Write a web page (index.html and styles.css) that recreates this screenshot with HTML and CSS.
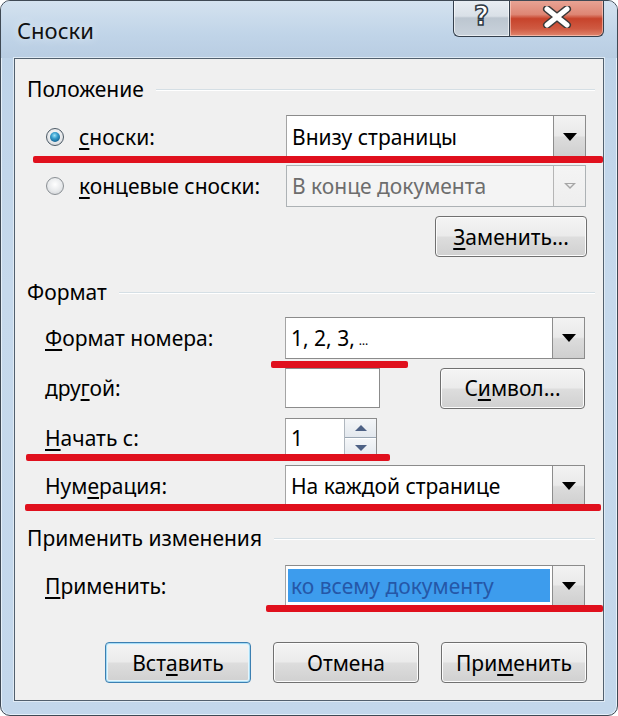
FILE: index.html
```html
<!DOCTYPE html>
<html lang="ru">
<head>
<meta charset="utf-8">
<title>Сноски</title>
<link rel="stylesheet" href="styles.css">
</head>
<body>
<div class="window">
  <div class="titlebar">
    <div class="title">Сноски</div>
    <div class="caption-buttons">
      <div class="cap-btn help"><span class="help-glyph">?</span></div>
      <div class="cap-btn close">
        <svg width="34" height="22" viewBox="0 0 34 22">
          <path d="M7 3 L27 19 M27 3 L7 19" stroke="#3a3a3a" stroke-width="8" stroke-linecap="round"/>
          <path d="M7 3 L27 19 M27 3 L7 19" stroke="#ffffff" stroke-width="5" stroke-linecap="round"/>
        </svg>
      </div>
    </div>
  </div>

  <div class="client">
    <div class="group-head"><span>Положение</span><i class="etch"></i></div>

    <div class="row r-first">
      <div class="label radio-label"><span class="radio checked"></span><span><u>с</u>носки:</span></div>
      <div class="combo"><span class="combo-text">Внизу страницы</span><span class="drop"><i class="tri"></i></span></div>
    </div>

    <div class="row r-gap7">
      <div class="label radio-label"><span class="radio"></span><span><u>к</u>онцевые сноски:</span></div>
      <div class="combo disabled"><span class="combo-text">В конце документа</span><span class="drop"><i class="tri hollow"></i></span></div>
    </div>

    <div class="row r-gap9 r-right">
      <div class="btn btn-replace"><u>З</u>аменить...</div>
    </div>

    <div class="group-head g2"><span>Формат</span><i class="etch"></i></div>

    <div class="row r-fmt">
      <div class="label"><u>Ф</u>ормат номера:</div>
      <div class="combo"><span class="combo-text">1, 2, 3, <small class="dots">…</small></span><span class="drop"><i class="tri"></i></span></div>
    </div>

    <div class="row r-other">
      <div class="label">дру<u>г</u>ой:</div>
      <div class="controls-split">
        <div class="textbox"></div>
        <div class="btn btn-symbol">С<u>и</u>мвол...</div>
      </div>
    </div>

    <div class="row r-start">
      <div class="label"><u>Н</u>ачать с:</div>
      <div class="spinner">
        <span class="spin-text">1</span>
        <span class="spin-btns">
          <span class="spin up"><i class="stri up"></i></span>
          <span class="spin down"><i class="stri down"></i></span>
        </span>
      </div>
    </div>

    <div class="row r-gap7">
      <div class="label">Нум<u>е</u>рация:</div>
      <div class="combo"><span class="combo-text">На каждой странице</span><span class="drop"><i class="tri"></i></span></div>
    </div>

    <div class="group-head g3"><span>Применить изменения</span><i class="etch"></i></div>

    <div class="row r-apply">
      <div class="label"><u>П</u>рименить:</div>
      <div class="combo"><span class="combo-text selected">ко всему документу</span><span class="drop"><i class="tri"></i></span></div>
    </div>

    <div class="buttons">
      <div class="btn btn-main focused">Вст<u>а</u>вить</div>
      <div class="btn btn-main">Отмена</div>
      <div class="btn btn-main">При<u>м</u>енить</div>
    </div>
  </div>

  <i class="redline rl1"></i>
  <i class="redline rl2"></i>
  <i class="redline rl3"></i>
  <i class="redline rl4"></i>
  <i class="redline rl5"></i>
</div>
</body>
</html>
```

FILE: styles.css
```css
html, body {
  margin: 0;
  padding: 0;
  background: #ffffff;
}

body {
  font-family: "Noto Sans", "Open Sans", sans-serif;
  font-size: 21px;
  color: #000;
}

u {
  text-decoration: underline;
  text-underline-offset: 3px;
  text-decoration-thickness: 2px;
}

.window {
  position: relative;
  width: 618px;
  height: 716px;
  box-sizing: border-box;
  border: 1px solid #3f4954;
  border-radius: 10px;
  background: linear-gradient(180deg, #c2d6ea 0%, #bed3e8 8%, #c6d9ec 40%, #c3d7eb 100%);
  box-shadow: inset 0 0 0 1px #e6f0f9;
  overflow: hidden;
  display: flex;
  flex-direction: column;
}

.titlebar {
  height: 57px;
  display: flex;
  align-items: flex-start;
  background: linear-gradient(180deg, #d4e2ef 0%, #c0d4e8 60%, #b9cde2 100%);
}

.title {
  padding-left: 16px;
  padding-top: 15px;
  font-size: 22px;
  line-height: 28px;
  color: #111;
  text-shadow: 0 0 8px #e9f1f8;
}

.caption-buttons {
  margin-left: auto;
  margin-right: 13px;
  display: flex;
  margin-top: -1px;
}

.cap-btn {
  height: 37px;
  box-sizing: border-box;
  border: 1px solid #35404d;
  border-top: none;
  display: flex;
  align-items: center;
  justify-content: center;
}

.help {
  width: 56px;
  border-right: none;
  border-radius: 0 0 0 6px;
  background: linear-gradient(180deg, #e9eef3 0%, #d9e0e7 45%, #bcc6d0 50%, #c9d2db 100%);
  box-shadow: inset 0 0 0 1px rgba(255,255,255,0.6);
}

.help-glyph {
  font-family: "DejaVu Sans", sans-serif;
  font-weight: bold;
  font-size: 26px;
  line-height: 26px;
  color: #ffffff;
  -webkit-text-stroke: 1.5px #2f3a44;
  margin-top: -4px;
}

.close {
  width: 95px;
  border-radius: 0 0 6px 0;
  background: linear-gradient(180deg, #e8a596 0%, #de8674 40%, #c7432b 52%, #cf5a42 80%, #e0866e 100%);
  box-shadow: inset 0 0 0 1px rgba(255,220,210,0.55);
}

.close svg {
  margin-top: -2px;
}

.client {
  margin: 0 13px 14px 13px;
  flex: 1;
  border: 1px solid #52606e;
  background: #f0f0f0;
  padding: 0 16px 0 12px;
  display: flex;
  flex-direction: column;
  box-shadow: 0 0 0 1px #dfeaf4;
}

.group-head {
  height: 24px;
  line-height: 24px;
  margin-top: 18px;
  display: flex;
  align-items: center;
  gap: 12px;
}

.group-head.g2 { margin-top: 23px; }
.group-head.g3 { margin-top: 19px; }

.etch {
  flex: 1;
  height: 1px;
  margin-top: 2px;
  background: #d5dfe5;
  border-bottom: 1px solid #ffffff;
  margin-right: -8px;
}

.row {
  display: flex;
  align-items: center;
  height: 42px;
  padding-left: 18px;
}

.r-first { margin-top: 14px; height: 43px; }
.r-gap7 { margin-top: 7px; }
.r-gap9 { margin-top: 9px; }
.r-fmt { margin-top: 13px; }
.r-other { margin-top: 9px; height: 40px; }
.r-start { margin-top: 10px; height: 40px; }
.r-apply { margin-top: 15px; height: 41px; }

.r-right { justify-content: flex-end; height: 41px; }

.label {
  width: 240px;
  flex: none;
  white-space: nowrap;
  line-height: 26px;
}

.radio-label {
  display: flex;
  align-items: center;
  gap: 15px;
  margin-left: 1px;
}

.radio {
  width: 18px;
  height: 18px;
  box-sizing: border-box;
  border-radius: 50%;
  border: 1px solid #8a8f94;
  background: radial-gradient(circle at 50% 40%, #ffffff 0%, #e7e9eb 55%, #c8ccd0 100%);
  display: inline-block;
  position: relative;
  flex: none;
}

.radio.checked {
  border-color: #4c5a66;
}

.radio.checked::after {
  content: "";
  position: absolute;
  left: 3px;
  top: 3px;
  width: 10px;
  height: 10px;
  border-radius: 50%;
  background: radial-gradient(circle at 45% 35%, #9fe3f7 0%, #3aa0cf 35%, #135f8e 80%, #0c4b74 100%);
}

.combo {
  width: 300px;
  height: 100%;
  box-sizing: border-box;
  border: 1px solid #8b8b8b;
  border-left-color: #a4a4a4;
  background: #ffffff;
  display: flex;
  align-items: stretch;
}

.combo-text {
  flex: 1;
  display: flex;
  align-items: center;
  padding-left: 5px;
  white-space: nowrap;
}

.combo-text.selected {
  margin: 3px 2px 3px 2px;
  padding-left: 3px;
  background: #3d9ced;
  color: #2557a7;
}

.dots {
  font-size: 12px;
  margin-left: 4px;
  margin-top: 4px;
}

.drop {
  width: 32px;
  flex: none;
  box-sizing: border-box;
  border-left: 1px solid #8d8d8d;
  background: linear-gradient(180deg, #f3f3f3 0%, #e9e9e9 48%, #dcdcdc 52%, #cfcfcf 100%);
  display: flex;
  align-items: center;
  justify-content: center;
}

.tri {
  width: 0;
  height: 0;
  border-left: 7px solid transparent;
  border-right: 7px solid transparent;
  border-top: 8px solid #000;
}

.tri.hollow {
  border-left-width: 6px;
  border-right-width: 6px;
  border-top: 6px solid #a6a6a6;
  position: relative;
}

.tri.hollow::after {
  content: "";
  position: absolute;
  left: -3px;
  top: -5px;
  border-left: 3px solid transparent;
  border-right: 3px solid transparent;
  border-top: 3px solid #f0f0f0;
}

.combo.disabled {
  border-color: #adb2b5;
  background: #f4f4f4;
  color: #6d6d6d;
}

.combo.disabled .drop {
  border-left-color: #b5b5b5;
  background: linear-gradient(180deg, #f4f4f4 0%, #eeeeee 100%);
}

.controls-split {
  display: flex;
  align-items: center;
  width: 300px;
  height: 100%;
  justify-content: space-between;
}

.textbox {
  width: 95px;
  height: 40px;
  box-sizing: border-box;
  border: 1px solid #8b8b8b;
  border-left-color: #a4a4a4;
  background: #fff;
}

.btn {
  box-sizing: border-box;
  height: 41px;
  border: 1px solid #707070;
  border-radius: 4px;
  background: linear-gradient(180deg, #f4f4f4 0%, #ebebeb 48%, #dddddd 52%, #d0d0d0 100%);
  box-shadow: inset 0 0 0 1px #fcfcfc;
  display: flex;
  align-items: center;
  justify-content: center;
  white-space: nowrap;
}

.btn-replace { width: 152px; }
.btn-symbol { width: 145px; height: 41px; }

.spinner {
  width: 92px;
  height: 40px;
  box-sizing: border-box;
  border: 1px solid #8b8b8b;
  border-left-color: #a4a4a4;
  background: #fff;
  display: flex;
}

.spin-text {
  flex: 1;
  padding-left: 5px;
  display: flex;
  align-items: center;
}

.spin-btns {
  width: 31px;
  display: flex;
  flex-direction: column;
  border-left: 1px solid #b0b7bf;
}

.spin {
  flex: 1;
  display: flex;
  align-items: center;
  justify-content: center;
  background: linear-gradient(180deg, #f4f6f8 0%, #e3e8ee 100%);
}

.spin.up { border-bottom: 1px solid #9aa6b3; }
.spin.down { border-top: 1px solid #ffffff; }

.stri {
  width: 0;
  height: 0;
  border-left: 6px solid transparent;
  border-right: 6px solid transparent;
}

.stri.up { border-bottom: 6px solid #4d6185; }
.stri.down { border-top: 6px solid #4d6185; }

.buttons {
  margin-top: 36px;
  display: flex;
  justify-content: flex-end;
  gap: 22px;
}

.btn-main {
  width: 146px;
  height: 41px;
}

.btn-main.focused {
  border-color: #3c7fb1;
  box-shadow: inset 0 0 0 1px #a7dcf5, inset 0 0 0 2px #e5f5fc;
}

.redline {
  position: absolute;
  height: 7px;
  background: #e0101d;
  border-radius: 2px;
}

.rl1 { left: 32px; width: 570px; top: 155px; }
.rl2 { left: 270px; width: 137px; top: 360px; }
.rl3 { left: 25px; width: 364px; top: 453px; }
.rl4 { left: 24px; width: 576px; top: 503px; }
.rl5 { left: 265px; width: 337px; top: 604px; }
```
